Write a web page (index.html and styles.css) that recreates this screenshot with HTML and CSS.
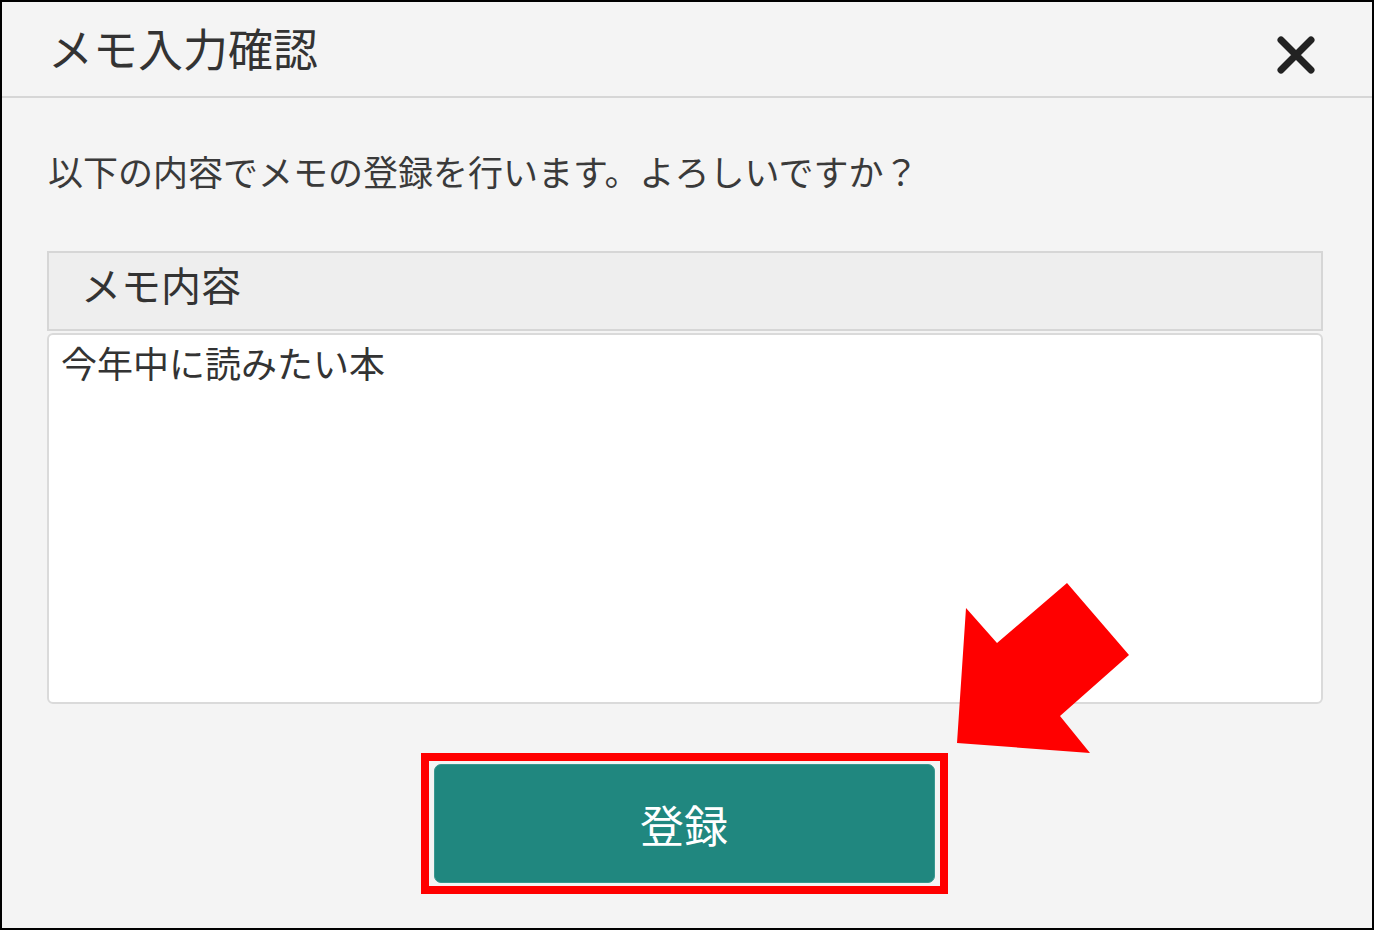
FILE: index.html
```html
<!DOCTYPE html>
<html lang="ja">
<head>
    <meta charset="UTF-8">
    <meta name="viewport" content="width=device-width, initial-scale=1.0">
    <title>メモ入力確認</title>
    <link rel="stylesheet" href="styles.css">
</head>
<body>
    <div class="dialog" role="dialog" aria-labelledby="dialog-title">
        <div class="dialog__header">
            <h1 class="dialog__title" id="dialog-title">メモ入力確認</h1>
            <button class="dialog__close" aria-label="閉じる">
                <svg width="40" height="40" viewBox="0 0 40 40">
                    <path d="M5 5 L35 35 M35 5 L5 35" stroke="#222" stroke-width="7" stroke-linecap="round"/>
                </svg>
            </button>
        </div>
        <div class="dialog__body">
            <p class="dialog__message">以下の内容でメモの登録を行います。よろしいですか？</p>
            <div class="memo">
                <div class="memo__label">メモ内容</div>
                <div class="memo__content">今年中に読みたい本</div>
            </div>
            <div class="dialog__actions">
                <div class="highlight">
                    <button class="button button--submit">登録</button>
                </div>
            </div>
        </div>
    </div>

    <!-- annotation arrow -->
    <svg class="pointer" width="1374" height="930" viewBox="0 0 1374 930" aria-hidden="true">
        <polygon points="966,608 997,643 1067,583 1129,655 1060,716 1090,753 957,743" fill="#ff0000"/>
    </svg>
</body>
</html>
```

FILE: styles.css
```css
/* Reset */
* {
    margin: 0;
    padding: 0;
    box-sizing: border-box;
}
body {
    position: relative;
    width: 1374px;
    height: 930px;
    font-family: "Noto Sans CJK JP", "Noto Sans", sans-serif;
    color: #333333;
    background-color: #f4f4f4;
}
.dialog {
    width: 1374px;
    height: 930px;
    border: 2px solid #000000;
    background-color: #f4f4f4;
    display: flex;
    flex-direction: column;
}
.dialog__header {
    height: 96px;
    display: flex;
    align-items: center;
    justify-content: space-between;
    padding: 0 56px 0 46px;
    border-bottom: 2px solid #d6d6d6;
}
.dialog__title {
    font-size: 45px;
    font-weight: normal;
    line-height: 1;
    color: #333333;
    margin-top: -4px;
}
.dialog__close {
    width: 40px;
    height: 40px;
    border: none;
    background: none;
    cursor: pointer;
    margin-top: 12px;
}
.dialog__body {
    padding: 0 49px 0 45px;
}
.dialog__message {
    font-size: 35px;
    line-height: 50px;
    margin-top: 48px;
    padding-left: 1px;
    color: #3a3a3a;
}
.memo {
    margin-top: 55px;
}
.memo__label {
    height: 80px;
    display: flex;
    align-items: center;
    padding: 0 0 14px 32px;
    font-size: 40px;
    background-color: #eeeeee;
    border: 2px solid #d6d6d6;
}
.memo__content {
    margin-top: 2px;
    height: 371px;
    padding: 2px 12px;
    font-size: 36px;
    line-height: 50px;
    background-color: #ffffff;
    border: 2px solid #dadada;
    border-radius: 6px;
}
.dialog__actions {
    display: flex;
    justify-content: center;
    margin-top: 49px;
    padding-right: 2px;
}
.highlight {
    border: 8px solid #ff0000;
    padding: 3px 5px;
}
.button {
    display: block;
    width: 501px;
    height: 119px;
    border: 1px solid #3a9890;
    border-radius: 7px;
    font-family: inherit;
    font-size: 44px;
    cursor: pointer;
}
.button--submit {
    background-color: #20877f;
    color: #ffffff;
}
.pointer {
    position: absolute;
    top: 0;
    left: 0;
    pointer-events: none;
}
```
